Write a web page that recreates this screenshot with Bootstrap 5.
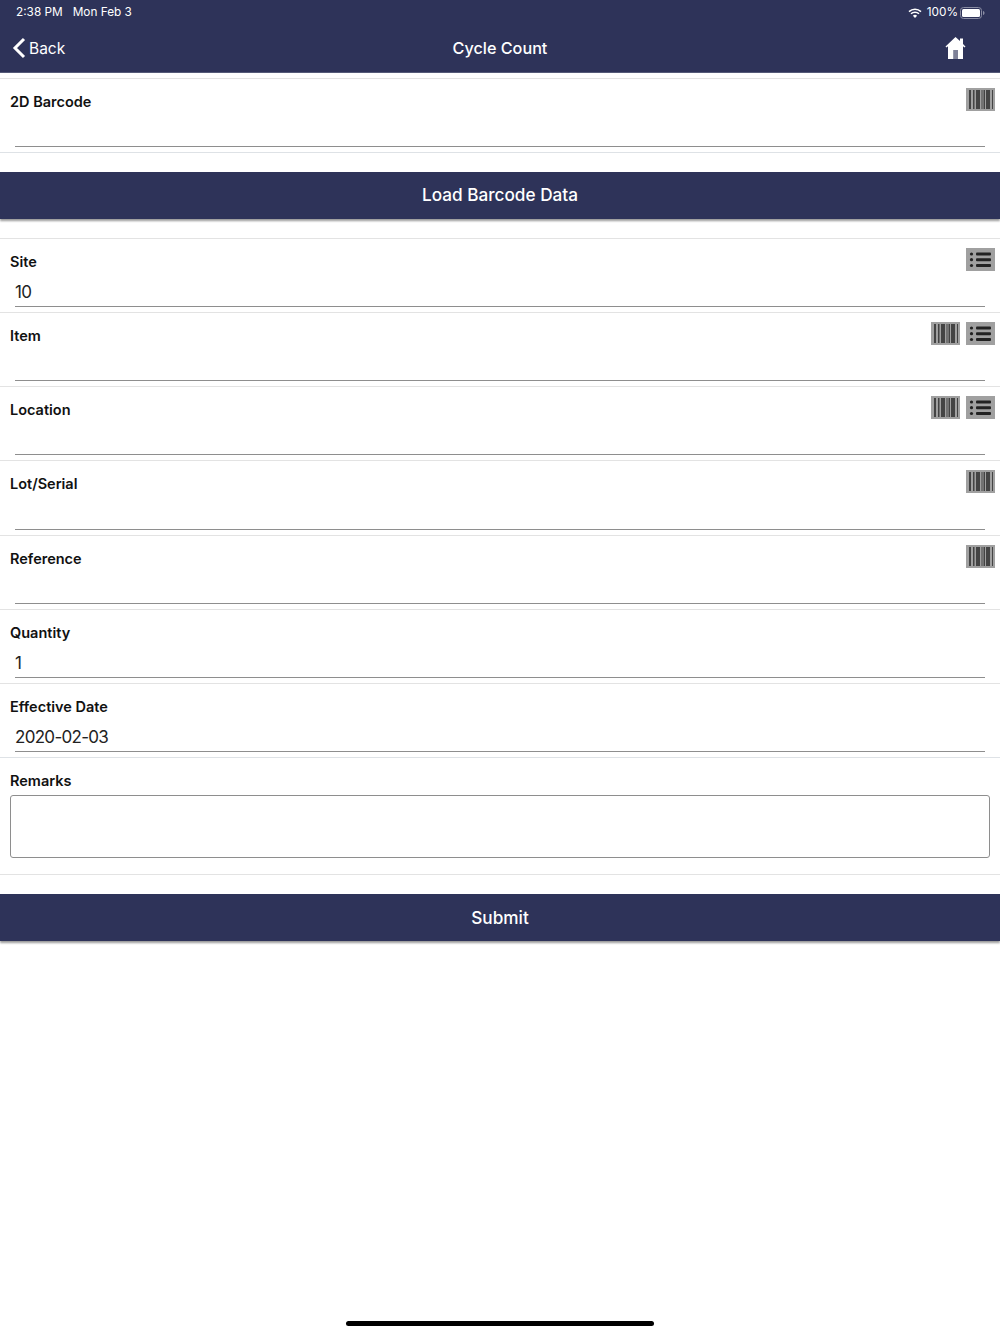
<!DOCTYPE html>
<html lang="en">
<head>
  <meta charset="UTF-8">
  <meta name="viewport" content="width=device-width, initial-scale=1">
  <title>Cycle Count</title>
  <link href="https://cdn.jsdelivr.net/npm/bootstrap@5.3.0/dist/css/bootstrap.min.css" rel="stylesheet">
  <style>
    body {
      font-family: Inter, "Liberation Sans", sans-serif;
      color: #111;
      background: #fff;
      height: 1334px;
      position: relative;
      overflow: hidden;
    }
    .app-head {
      background: #2e3359;
      color: #fff;
      height: 73px;
      border-bottom: 1px solid #555a78;
    }
    .status-line {
      height: 24px;
      padding: 1px 15px 0 16px;
      font-size: 11.8px;
    }
    .status-left { gap: 10px; }
    .status-right { gap: 2px; }
    .wifi-mark { margin-right: 3px; }
    .title-line { height: 48px; position: relative; }
    .back-link { font-size: 15.5px; color: #fff; padding-left: 12px; gap: 3px; }
    .back-text { padding-top: 2px; }
    .page-title {
      position: absolute;
      left: 0;
      right: 0;
      text-align: center;
      font-size: 16.2px;
      font-weight: 500;
    }
    .home-link { position: absolute; right: 33px; top: 12px; line-height: 0; }
    .field-row {
      height: 74px;
      border-top: 1px solid #e3e3e3;
      position: relative;
    }
    .field-row.first-row { margin-top: 5px; }
    .field-row.tall-row { height: 75px; }
    .field-label {
      font-size: 14.5px;
      font-weight: 600;
      margin: 0;
      padding: 14px 0 0 10px;
      line-height: 18px;
    }
    .field-input.form-control {
      position: absolute;
      left: 15px;
      right: 15px;
      bottom: 5px;
      width: auto;
      height: 30px;
      padding: 0;
      border: 0;
      border-bottom: 1px solid #8e8e8e;
      border-radius: 0;
      font-size: 17px;
      letter-spacing: -.7px;
      color: #222;
    }
    .tool-icons { position: absolute; top: 9px; right: 5px; gap: 6px; }
    .tool-btn {
      width: 29px;
      height: 23px;
      padding: 0;
      border: 0;
      border-radius: 0;
      background: #a0a0a0;
      line-height: 0;
    }
    .action-bar.btn {
      display: block;
      width: 100%;
      height: 47px;
      padding: 0;
      border: 0;
      border-radius: 0;
      background: #2e3359;
      color: #fff;
      font-size: 17.2px;
      font-weight: 500;
      box-shadow: 0 2px 2px rgba(0, 0, 0, .4);
    }
    .load-bar.btn { margin: 19px 0; padding-bottom: 2px; }
    .submit-bar { margin-top: 19px; }
    .remarks-row { height: 118px; border-bottom: 1px solid #e3e3e3; }
    .remarks-box.form-control {
      display: block;
      width: 980px;
      height: 63px;
      margin: 3px 10px 0;
      border: 1px solid #8e8e8e;
      border-radius: 3px;
      resize: none;
    }
    .home-bar {
      position: absolute;
      left: 346px;
      bottom: 8px;
      width: 308px;
      height: 5px;
      border-radius: 3px;
      background: #000;
    }
  </style>
</head>
<body>
  <svg width="0" height="0" class="d-block">
    <symbol id="i-barcode" viewBox="0 0 29 23">
      <path fill="#444" d="M3 2h2v19H3zM7 2h1.500v19H7zM10 2h4v19h-4zM15.500 2h1v19h-1zM17.500 2H19v19h-1.500zM20 2h4v19h-4zM26 2h1v19h-1z"/>
    </symbol>
    <symbol id="i-list" viewBox="0 0 29 23">
      <g fill="#222">
        <circle cx="5.500" cy="6" r="1.600"/><circle cx="5.500" cy="11.700" r="1.600"/><circle cx="5.500" cy="17.500" r="1.600"/>
        <rect x="10" y="4.500" width="15" height="3" rx="1"/><rect x="10" y="10.200" width="15" height="3" rx="1"/><rect x="10" y="16" width="15" height="3" rx="1"/>
      </g>
    </symbol>
  </svg>

  <header class="app-head">
    <div class="status-line d-flex align-items-center justify-content-between">
      <div class="status-left d-flex"><span>2:38 PM</span><span>Mon Feb 3</span></div>
      <div class="status-right d-flex align-items-center">
        <svg class="wifi-mark" width="14" height="10" viewBox="0 0 14 10"><path fill="none" stroke="#fff" stroke-width="1.500" d="M1 3.600a8.600 8.600 0 0 1 12 0M3 5.800a5.700 5.700 0 0 1 8 0"/><path fill="#fff" d="M7 10 4.900 7.800a3 3 0 0 1 4.200 0z"/></svg>
        <span>100%</span>
        <svg width="25" height="12" viewBox="0 0 25 12"><rect x=".5" y=".5" width="21" height="11" rx="3" fill="none" stroke="#8a8da3"/><rect x="2" y="2" width="18" height="8" rx="1.500" fill="#fff"/><path fill="#8a8da3" d="M23 4c1 .3 1.500 1 1.500 2s-.5 1.700-1.500 2z"/></svg>
      </div>
    </div>
    <div class="title-line d-flex align-items-center">
      <a class="back-link d-flex align-items-center text-decoration-none" href="#">
        <svg width="14" height="22" viewBox="0 0 14 22"><path fill="none" stroke="#fff" stroke-width="3" d="M12 2 3 11l9 9"/></svg>
        <span class="back-text">Back</span>
      </a>
      <div class="page-title">Cycle Count</div>
      <a class="home-link" href="#">
        <svg width="22" height="25" viewBox="0 0 22 25"><path fill="#fff" d="M10.500 1 .5 10.500l1 1L3 10.300V23h15V10.300l1.500 1.200 1-1L18 8V2.500h-3V5z"/><path fill="#7f8299" d="M8.200 14H13v9H8.200z"/></svg>
      </a>
    </div>
  </header>

  <div class="field-row first-row">
    <label class="field-label">2D Barcode</label>
    <div class="tool-icons d-flex">
      <button class="tool-btn btn"><svg width="29" height="23"><use href="#i-barcode"/></svg></button>
    </div>
    <input class="field-input form-control" type="text">
  </div>
  <div class="border-top"></div>
  <button class="action-bar btn load-bar">Load Barcode Data</button>
  <div class="field-row">
    <label class="field-label">Site</label>
    <div class="tool-icons d-flex">
      <button class="tool-btn btn"><svg width="29" height="23"><use href="#i-list"/></svg></button>
    </div>
    <input class="field-input form-control" type="text" value="10">
  </div>
  <div class="field-row">
    <label class="field-label">Item</label>
    <div class="tool-icons d-flex">
      <button class="tool-btn btn"><svg width="29" height="23"><use href="#i-barcode"/></svg></button>
      <button class="tool-btn btn"><svg width="29" height="23"><use href="#i-list"/></svg></button>
    </div>
    <input class="field-input form-control" type="text">
  </div>
  <div class="field-row">
    <label class="field-label">Location</label>
    <div class="tool-icons d-flex">
      <button class="tool-btn btn"><svg width="29" height="23"><use href="#i-barcode"/></svg></button>
      <button class="tool-btn btn"><svg width="29" height="23"><use href="#i-list"/></svg></button>
    </div>
    <input class="field-input form-control" type="text">
  </div>
  <div class="field-row tall-row">
    <label class="field-label">Lot/Serial</label>
    <div class="tool-icons d-flex">
      <button class="tool-btn btn"><svg width="29" height="23"><use href="#i-barcode"/></svg></button>
    </div>
    <input class="field-input form-control" type="text">
  </div>
  <div class="field-row">
    <label class="field-label">Reference</label>
    <div class="tool-icons d-flex">
      <button class="tool-btn btn"><svg width="29" height="23"><use href="#i-barcode"/></svg></button>
    </div>
    <input class="field-input form-control" type="text">
  </div>
  <div class="field-row">
    <label class="field-label">Quantity</label>
    <input class="field-input form-control" type="text" value="1">
  </div>
  <div class="field-row">
    <label class="field-label">Effective Date</label>
    <input class="field-input form-control" type="text" value="2020-02-03">
  </div>
  <div class="remarks-row border-top">
    <label class="field-label">Remarks</label>
    <textarea class="remarks-box form-control"></textarea>
  </div>
  <button class="action-bar btn submit-bar">Submit</button>
  <div class="home-bar"></div>
  <script src="https://cdn.jsdelivr.net/npm/bootstrap@5.3.0/dist/js/bootstrap.bundle.min.js"></script>
</body>
</html>
